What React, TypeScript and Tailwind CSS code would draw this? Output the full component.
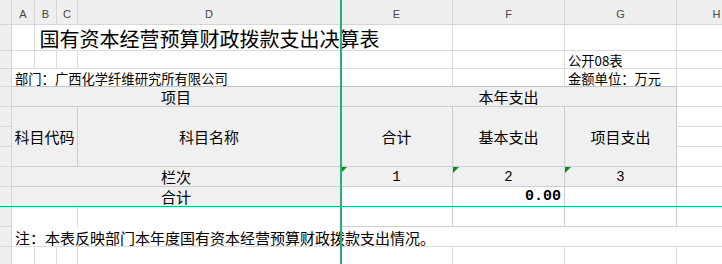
import React from "react"

const hd = "flex items-center justify-center pt-[4px] bg-[#efefef] border-r border-b border-[#d6d6d6] text-[11px] text-[#444] font-['Liberation_Sans',sans-serif]"
const rh = "bg-[#efefef] border-r border-b border-[#d6d6d6]"
const g = "border-r border-b border-[#dcdcdc]"
const tb = "flex items-center justify-center bg-[#f0f0f0] border-r border-b border-[#cdcdcd] text-[15px] whitespace-nowrap"
const top = "border-r border-b border-r-[#dcdcdc] border-b-[#c2c2c2]"
const num = "relative flex items-center justify-center bg-[#f0f0f0] border-r border-b border-[#cdcdcd] text-[14px] font-['Liberation_Mono',monospace]"

function Flag() {
  return (
    <svg className="absolute left-0 top-0" width="6" height="6" viewBox="0 0 6 6">
      <polygon points="0,0 6,0 0,6" fill="#138a13" />
    </svg>
  )
}

export default function App() {
  const cols = ["A", "B", "C", "D", "E", "F", "G", "H"]

  return (
    <div className="relative w-[722px] h-[264px] overflow-hidden bg-white text-black font-['Noto_Sans_CJK_SC',sans-serif] leading-none">
      <div className="grid grid-cols-[12px_23px_22px_21px_263px_112px_112px_112px_80px] grid-rows-[25px_26px_18px_18px_20px_20px_20px_20px_20px_20px_20px_20px_20px_20px]">
        {/* column headers */}
        <div className={rh} />
        {cols.map((c) => (
          <div key={c} className={hd}>{c}</div>
        ))}

        {/* title */}
        <div className={rh} />
        <div className={g} />
        <div className="border-b border-[#dcdcdc]" />
        <div className="border-b border-[#dcdcdc]" />
        <div className="flex items-center justify-center pt-[3px] whitespace-nowrap border-b border-[#dcdcdc] text-[20px]">
          国有资本经营预算财政拨款支出决算表
        </div>
        <div className={g} />
        <div className={g} />
        <div className={g} />
        <div className={g} />

        {/* 公开08表 */}
        <div className={rh} />
        <div className={g} />
        <div className={g} />
        <div className={g} />
        <div className={g} />
        <div className={g} />
        <div className={g} />
        <div className={g + " flex items-center pl-[3px] pt-[2px] text-[13.3px] whitespace-nowrap"}>公开08表</div>
        <div className={g} />

        {/* 部门 */}
        <div className={rh} />
        <div className={top + " col-span-4 flex items-center pl-[3px] pt-[2px] text-[13.3px] whitespace-nowrap"}>
          部门：广西化学纤维研究所有限公司
        </div>
        <div className={top} />
        <div className={top} />
        <div className={top + " flex items-center pl-[3px] pt-[2px] text-[13.3px] whitespace-nowrap"}>金额单位：万元</div>
        <div className={g} />

        {/* header rows */}
        <div className={rh} />
        <div className={tb + " col-span-4"}>项目</div>
        <div className={tb + " col-span-3"}>本年支出</div>
        <div className={g} />

        <div className={rh} />
        <div className={tb + " col-span-3 row-span-3"}>科目代码</div>
        <div className={tb + " row-span-3"}>科目名称</div>
        <div className={tb + " row-span-3"}>合计</div>
        <div className={tb + " row-span-3"}>基本支出</div>
        <div className={tb + " row-span-3"}>项目支出</div>
        <div className={g} />
        <div className={rh} />
        <div className={g} />
        <div className={rh} />
        <div className={g} />

        {/* 栏次 */}
        <div className={rh} />
        <div className={tb + " col-span-4"}>栏次</div>
        <div className={num}><Flag />1</div>
        <div className={num}><Flag />2</div>
        <div className={num}><Flag />3</div>
        <div className={g} />

        {/* 合计 */}
        <div className={rh} />
        <div className={tb + " col-span-4"}>合计</div>
        <div className="border-r border-b border-[#cdcdcd]" />
        <div className="flex items-center justify-end pr-[3px] border-r border-b border-[#cdcdcd] text-[15px] font-bold font-['Liberation_Mono',monospace]">
          0.00
        </div>
        <div className="border-r border-b border-[#cdcdcd]" />
        <div className={g} />

        {/* blank row */}
        <div className={rh} />
        <div className="col-span-3 border-r border-[#dcdcdc]" />
        <div className="border-r border-[#dcdcdc]" />
        <div className="border-r border-b border-[#cdcdcd]" />
        <div className="border-r border-b border-[#cdcdcd]" />
        <div className="border-r border-b border-[#cdcdcd]" />
        <div className={g} />

        {/* note */}
        <div className={rh} />
        <div className="col-span-7 flex items-center pl-[3px] pt-[2px] border-b border-[#dcdcdc] text-[15px] whitespace-nowrap">
          注：本表反映部门本年度国有资本经营预算财政拨款支出情况。
        </div>
        <div className={g} />

        {[0, 1].map((r) => (
          <React.Fragment key={r}>
            <div className={rh} />
            {cols.map((c) => (
              <div key={c} className={g} />
            ))}
          </React.Fragment>
        ))}
      </div>

      {/* freeze pane lines */}
      <div className="absolute left-[340px] top-0 h-full w-[2px] bg-[#21b27a]" />
      <div className="absolute left-0 top-[206px] h-px w-full bg-[#21b27a]" />
    </div>
  )
}
